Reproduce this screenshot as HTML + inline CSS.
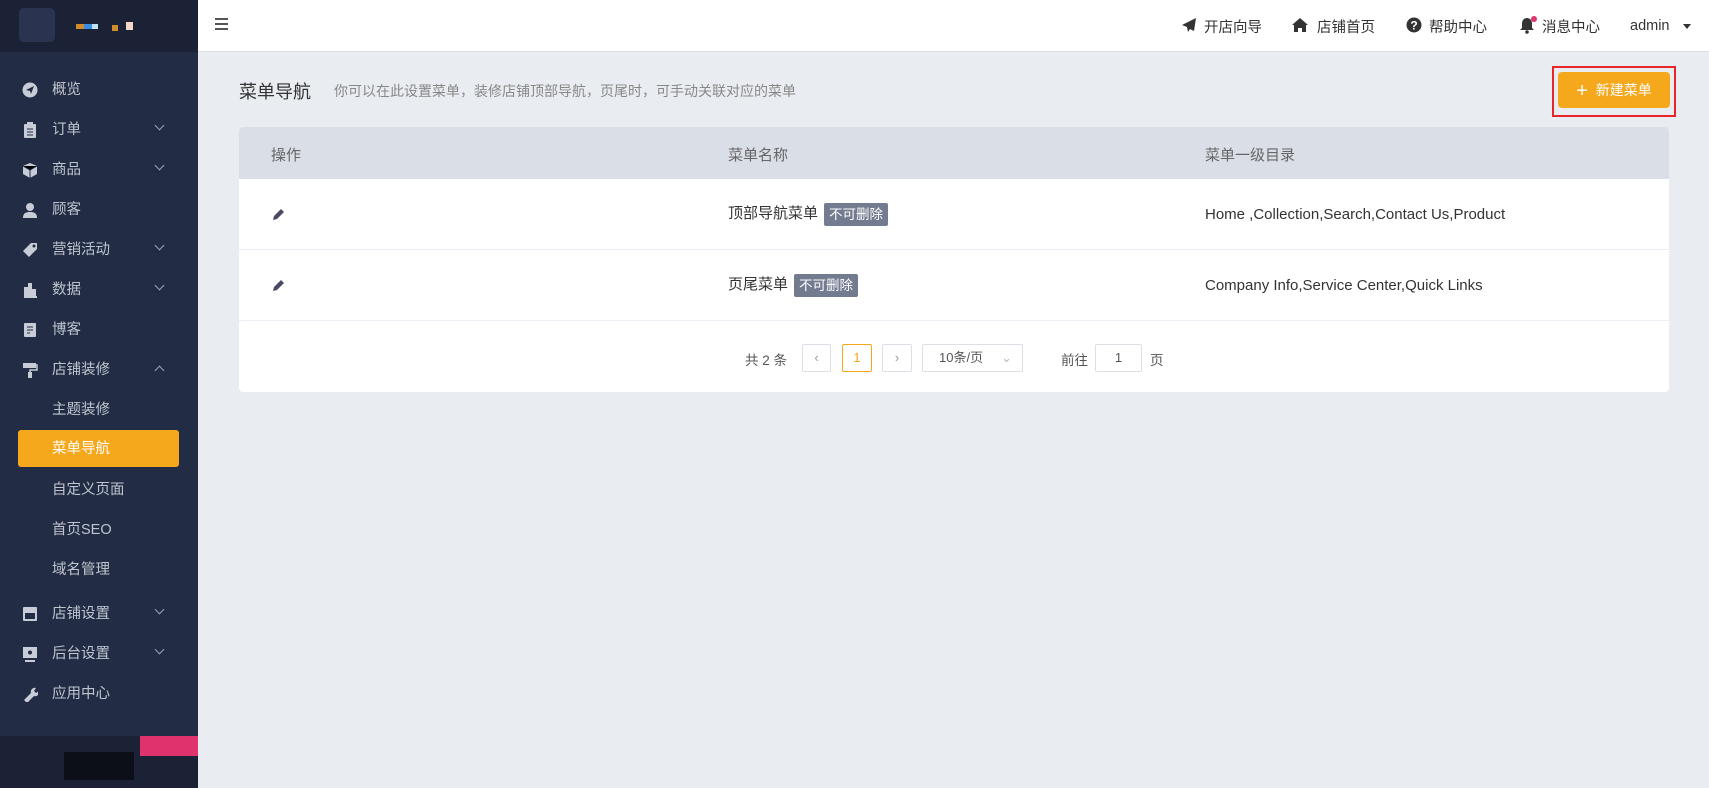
<!DOCTYPE html>
<html><head><meta charset="utf-8"><style>
*{margin:0;padding:0;box-sizing:border-box}
body{width:1709px;height:788px;overflow:hidden;background:#e9ecf1;font-family:"Liberation Sans","Noto Sans CJK SC",sans-serif;font-size:15px;color:#333;position:relative}
.a{position:absolute;white-space:nowrap}
#side{position:absolute;left:0;top:0;width:198px;height:788px;background:#222d45}
#logo{position:absolute;left:0;top:0;width:198px;height:52px;background:#1b2236}
#bot{position:absolute;left:0;top:736px;width:198px;height:52px;background:#1b2236}
.mi{position:absolute;left:52px;color:#bfc4ce;font-size:14.5px;line-height:20px}
.ic{position:absolute;left:22px;width:16px;height:16px}
.ch{position:absolute;left:156px;width:7px;height:7px;border-right:1.5px solid #9aa2b3;border-bottom:1.5px solid #9aa2b3;transform:rotate(45deg)}
.cu{transform:rotate(-135deg)}
#top{position:absolute;left:198px;top:0;right:0;height:52px;background:#fff;border-bottom:1px solid #dcdfe6}
.tn{position:absolute;top:16px;font-size:14.5px;color:#333}
.tbl{position:absolute;left:239px;top:127px;width:1430px;height:265px;background:#fff;border-radius:4px;overflow:hidden}
.th{position:absolute;left:0;top:0;width:100%;height:52px;background:#d9dee7}
.row{position:absolute;left:0;width:100%;border-bottom:1px solid #ebeef5}
.tag{display:inline-block;background:#737b91;color:#fff;font-size:13.5px;padding:0 5px;height:23px;line-height:23px;border-radius:2px;margin-left:6px;vertical-align:middle}
.pb{position:absolute;top:344px;height:28px;border:1px solid #dcdfe6;border-radius:2px;background:#fff;font-size:13px;text-align:center;line-height:26px;color:#999}
</style></head><body>
<div id="side">
<div id="logo"><div class="a" style="left:19px;top:8px;width:36px;height:34px;background:#2a3450;border-radius:5px"></div>
<div class="a" style="left:76px;top:24px;width:8px;height:5px;background:#d08b2b"></div><div class="a" style="left:84px;top:24px;width:8px;height:5px;background:#3a8ee0"></div><div class="a" style="left:92px;top:24px;width:6px;height:5px;background:#bfe3f2"></div>
<div class="a" style="left:112px;top:25px;width:6px;height:6px;background:#d08b2b"></div><div class="a" style="left:126px;top:22px;width:7px;height:8px;background:#f2d8c5"></div></div>
<svg class="ic" style="top:82px" viewBox="0 0 16 16"><circle cx="8" cy="8" r="7.5" fill="#c7ccd6"/><path d="M4 8l8-4-3 8-1-3z" fill="#222d45"/></svg><div class="mi" style="top:80px">概览</div>
<svg class="ic" style="top:122px" viewBox="0 0 16 16"><rect x="2" y="2" width="12" height="14" rx="1" fill="#c7ccd6"/><rect x="5" y="0" width="6" height="3" fill="#c7ccd6"/><path d="M5 7h6M5 10h6M5 13h6" stroke="#222d45"/></svg><div class="mi" style="top:120px">订单</div><div class="ch" style="top:122px"></div>
<svg class="ic" style="top:162px" viewBox="0 0 16 16"><path d="M8 1l7 3v8l-7 4-7-4V4z" fill="#c7ccd6"/><path d="M1 4l7 4 7-4M8 8v8" stroke="#222d45"/></svg><div class="mi" style="top:160px">商品</div><div class="ch" style="top:162px"></div>
<svg class="ic" style="top:202px" viewBox="0 0 16 16"><circle cx="8" cy="5" r="4" fill="#c7ccd6"/><path d="M1 16c0-5 3-6 7-6s7 1 7 6z" fill="#c7ccd6"/></svg><div class="mi" style="top:200px">顾客</div>
<svg class="ic" style="top:242px" viewBox="0 0 16 16"><path d="M1 9l8-8h6v6l-8 8z" fill="#c7ccd6"/><circle cx="12" cy="4" r="1.5" fill="#222d45"/></svg><div class="mi" style="top:240px">营销活动</div><div class="ch" style="top:242px"></div>
<svg class="ic" style="top:282px" viewBox="0 0 16 16"><path d="M2 15h13M3 14V6h2v8M7 14V2h2v12M11 14V8h2v6" stroke="#c7ccd6" stroke-width="2" fill="none"/></svg><div class="mi" style="top:280px">数据</div><div class="ch" style="top:282px"></div>
<svg class="ic" style="top:322px" viewBox="0 0 16 16"><rect x="2" y="1" width="12" height="14" rx="1" fill="#c7ccd6"/><path d="M5 5h6M5 8h6M5 11h3" stroke="#222d45"/></svg><div class="mi" style="top:320px">博客</div>
<svg class="ic" style="top:362px" viewBox="0 0 16 16"><rect x="1" y="1" width="13" height="5" fill="#c7ccd6"/><path d="M14 3h1v5H8v3" stroke="#c7ccd6" stroke-width="1.5" fill="none"/><rect x="6" y="10" width="4" height="6" fill="#c7ccd6"/></svg><div class="mi" style="top:360px">店铺装修</div><div class="ch cu" style="top:367px"></div>
<div class="mi" style="top:400px">主题装修</div>
<div class="a" style="left:18px;top:430px;width:161px;height:37px;background:#f5a81c;border-radius:3px"></div><div class="mi" style="top:439px;color:#fff">菜单导航</div>
<div class="mi" style="top:480px">自定义页面</div>
<div class="mi" style="top:520px">首页SEO</div>
<div class="mi" style="top:560px">域名管理</div>
<svg class="ic" style="top:606px" viewBox="0 0 16 16"><rect x="1" y="1" width="14" height="14" rx="1" fill="#c7ccd6"/><rect x="3" y="7" width="10" height="6" fill="#222d45"/></svg><div class="mi" style="top:604px">店铺设置</div><div class="ch" style="top:606px"></div>
<svg class="ic" style="top:646px" viewBox="0 0 16 16"><rect x="1" y="1" width="14" height="11" fill="#c7ccd6"/><rect x="3" y="14" width="10" height="2" fill="#c7ccd6"/><circle cx="8" cy="6.5" r="2" fill="#222d45"/></svg><div class="mi" style="top:644px">后台设置</div><div class="ch" style="top:646px"></div>
<svg class="ic" style="top:686px" viewBox="0 0 16 16"><path d="M2 14l7-7a4 4 0 015-5l-2 3 2 2 3-2a4 4 0 01-5 5l-7 7z" fill="#c7ccd6"/></svg><div class="mi" style="top:684px">应用中心</div>
<div id="bot"><div class="a" style="left:140px;top:0;width:58px;height:20px;background:#e0336e"></div><div class="a" style="left:64px;top:16px;width:70px;height:28px;background:#0c0f18"></div></div>
</div>
<div id="top">
<div class="a" style="left:17px;top:18px;width:13px;height:2px;background:#555;box-shadow:0 5px #555,0 10px #555"></div>
<svg class="a" style="left:983px;top:17px" width="16" height="16" viewBox="0 0 16 16"><path d="M15 1L1 8l5 2 1 5 2-3 4 2z" fill="#333"/></svg><div class="tn" style="left:1006px">开店向导</div>
<svg class="a" style="left:1094px;top:17px" width="16" height="16" viewBox="0 0 16 16"><path d="M8 1l8 7h-2v7h-4v-4H6v4H2V8H0z" fill="#333"/></svg><div class="tn" style="left:1119px">店铺首页</div>
<svg class="a" style="left:1208px;top:17px" width="16" height="16" viewBox="0 0 16 16"><circle cx="8" cy="8" r="7.5" fill="#333"/><text x="8" y="12.5" font-size="12" font-weight="bold" fill="#fff" text-anchor="middle" font-family="Liberation Sans">?</text></svg><div class="tn" style="left:1231px">帮助中心</div>
<svg class="a" style="left:1322px;top:16px" width="18" height="18" viewBox="0 0 18 18"><path d="M7 2a5 5 0 015 5v5l2 2H0l2-2V7a5 5 0 015-5z" fill="#333"/><circle cx="7" cy="16" r="1.8" fill="#333"/><circle cx="14" cy="3" r="3" fill="#e0336e"/></svg><div class="tn" style="left:1344px">消息中心</div>
<div class="tn" style="left:1432px;top:18px">admin</div>
<div class="a" style="left:1485px;top:24px;border:4.5px solid transparent;border-top:5px solid #333"></div>
</div>
<div class="a" style="left:239px;top:78px;font-size:18px;color:#333">菜单导航</div>
<div class="a" style="left:334px;top:81px;font-size:14px;color:#888">你可以在此设置菜单，装修店铺顶部导航，页尾时，可手动关联对应的菜单</div>
<div class="a" style="left:1552px;top:66px;width:124px;height:51px;border:2px solid #e8262a"></div>
<div class="a" style="left:1558px;top:72px;width:112px;height:36px;background:#f5a81c;border-radius:4px;color:#fff;font-size:14px;line-height:36px;text-align:center"><span style="font-size:20px;vertical-align:-2px">+</span>&nbsp; 新建菜单</div>
<div class="tbl">
<div class="th"></div>
<div class="a" style="left:32px;top:17px;color:#666">操作</div>
<div class="a" style="left:489px;top:17px;color:#666">菜单名称</div>
<div class="a" style="left:966px;top:17px;color:#666">菜单一级目录</div>
<div class="row" style="top:52px;height:71px"></div>
<div class="row" style="top:123px;height:71px"></div>
<svg class="a" style="left:33px;top:80px" width="14" height="14" viewBox="0 0 14 14"><path d="M1 13l1-4 7-7 3 3-7 7z" fill="#4a4a66"/></svg>
<svg class="a" style="left:33px;top:151px" width="14" height="14" viewBox="0 0 14 14"><path d="M1 13l1-4 7-7 3 3-7 7z" fill="#4a4a66"/></svg>
<div class="a" style="left:489px;top:75px;color:#333">顶部导航菜单<span class="tag">不可删除</span></div>
<div class="a" style="left:489px;top:146px;color:#333">页尾菜单<span class="tag">不可删除</span></div>
<div class="a" style="left:966px;top:79px;color:#333">Home ,Collection,Search,Contact Us,Product</div>
<div class="a" style="left:966px;top:150px;color:#333">Company Info,Service Center,Quick Links</div>
</div>
<div class="a" style="left:745px;top:349px;font-size:13.5px;color:#555">共 2 条</div>
<div class="pb" style="left:802px;width:29px">‹</div>
<div class="pb" style="left:842px;width:30px;border-color:#f5a81c;color:#f5a81c">1</div>
<div class="pb" style="left:882px;width:30px">›</div>
<div class="pb" style="left:922px;width:101px;color:#555;text-align:left;padding-left:16px">10条/页<span style="position:absolute;right:10px;color:#bbb">⌄</span></div>
<div class="a" style="left:1061px;top:349px;font-size:13.5px;color:#555">前往</div>
<div class="pb" style="left:1095px;width:47px;color:#555">1</div>
<div class="a" style="left:1150px;top:349px;font-size:13.5px;color:#555">页</div>
</body></html>
